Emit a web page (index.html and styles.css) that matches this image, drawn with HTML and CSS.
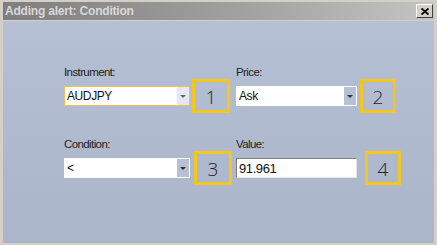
FILE: index.html
```html
<!DOCTYPE html>
<html lang="en">
<head>
    <meta charset="UTF-8" />
    <title>Adding alert: Condition</title>
    <link rel="stylesheet" href="styles.css">
</head>
<body>
    <div class="window">
        <div class="titlebar">
            <span class="title">Adding alert: Condition</span>
            <button class="close">
                <svg width="8" height="7" viewBox="0 0 8 7"><path d="M0.5 0.5 L7.5 6.5 M7.5 0.5 L0.5 6.5" stroke="#000" stroke-width="1.8"/></svg>
            </button>
        </div>
        <div class="content">
            <div class="row">
                <div class="field field-left">
                    <label>Instrument:</label>
                    <div class="select focused">
                        <span class="value">AUDJPY</span>
                        <span class="arrow"></span>
                    </div>
                </div>
                <div class="marker m1">1</div>
                <div class="field field-right">
                    <label>Price:</label>
                    <div class="select">
                        <span class="value">Ask</span>
                        <span class="arrow"></span>
                    </div>
                </div>
                <div class="marker m2">2</div>
            </div>
            <div class="row">
                <div class="field field-left">
                    <label>Condition:</label>
                    <div class="select">
                        <span class="value">&lt;</span>
                        <span class="arrow"></span>
                    </div>
                </div>
                <div class="marker m3">3</div>
                <div class="field field-right">
                    <label>Value:</label>
                    <div class="input">91.961</div>
                </div>
                <div class="marker m4">4</div>
            </div>
        </div>
    </div>
</body>
</html>
```

FILE: styles.css
```css
body {
    margin: 0;
    background: #d4d0c8;
    font-family: "Liberation Sans", Arial, sans-serif;
}
.window {
    width: 437px;
    height: 245px;
    box-sizing: border-box;
    padding: 2px 3px;
    background: #d4d0c8;
    display: flex;
    flex-direction: column;
}
.titlebar {
    height: 18px;
    display: flex;
    align-items: center;
    justify-content: space-between;
    padding: 0 1px 0 2px;
    background: linear-gradient(to right, #7e7e7e, #a4a4a4 60%, #c4c4c4);
}
.title {
    font-weight: bold;
    font-size: 12px;
    color: #d8d8d8;
    letter-spacing: -0.2px;
}
.close {
    width: 17px;
    height: 14px;
    padding: 0;
    background: #d4d0c8;
    border: 1px solid;
    border-color: #fff #404040 #404040 #fff;
    display: flex;
    align-items: center;
    justify-content: center;
}
.content {
    flex: 1;
    margin-top: 1px;
    padding: 45px 0 0 61px;
    background: linear-gradient(to bottom, #b6c0d4, #abb5ca);
}
.row {
    display: flex;
    align-items: flex-end;
    margin-bottom: 32px;
}
.field {
    display: flex;
    flex-direction: column;
    gap: 7px;
}
.field-left {
    width: 126px;
}
.field-right {
    width: 121px;
}
label {
    font-size: 11.5px;
    line-height: 13px;
    letter-spacing: -0.6px;
    color: #222;
}
.select, .input {
    height: 20px;
    box-sizing: border-box;
    display: flex;
    align-items: center;
    background: #fff;
    border: 1px solid #fff;
    font-size: 12px;
    letter-spacing: -0.4px;
    color: #111;
}
.select.focused {
    border-color: #f0c050;
}
.value {
    flex: 1;
    padding-left: 2px;
}
.arrow {
    width: 12px;
    height: 18px;
    background: #b7c1d3;
    position: relative;
}
.arrow::after {
    content: "";
    position: absolute;
    left: 3px;
    top: 8px;
    border-left: 3px solid transparent;
    border-right: 3px solid transparent;
    border-top: 3px solid #333;
}
.focused .arrow {
    background: #e4e8f0;
    border-left: 1px solid #f4f6fa;
}
.focused .arrow::after {
    border-top-color: #666;
}
.input {
    border: 1px solid;
    border-color: #808080 #e4e4e4 #e4e4e4 #808080;
    padding-left: 2px;
    font-size: 13px;
}
.marker {
    width: 38px;
    height: 34px;
    box-sizing: border-box;
    margin-bottom: -7px;
    border: 3px solid #f6c61c;
    display: flex;
    align-items: center;
    justify-content: center;
    padding-top: 2px;
    font-family: "Open Sans", sans-serif;
    font-weight: 300;
    font-size: 19px;
    color: #1e1e1e;
}
.m1 {
    margin: 0 6px -7px 2px;
}
.m2 {
    margin-left: 3px;
    width: 36px;
}
.m3 {
    margin: 0 4px -7px 4px;
}
.m4 {
    margin-left: 8px;
    width: 36px;
}
```
